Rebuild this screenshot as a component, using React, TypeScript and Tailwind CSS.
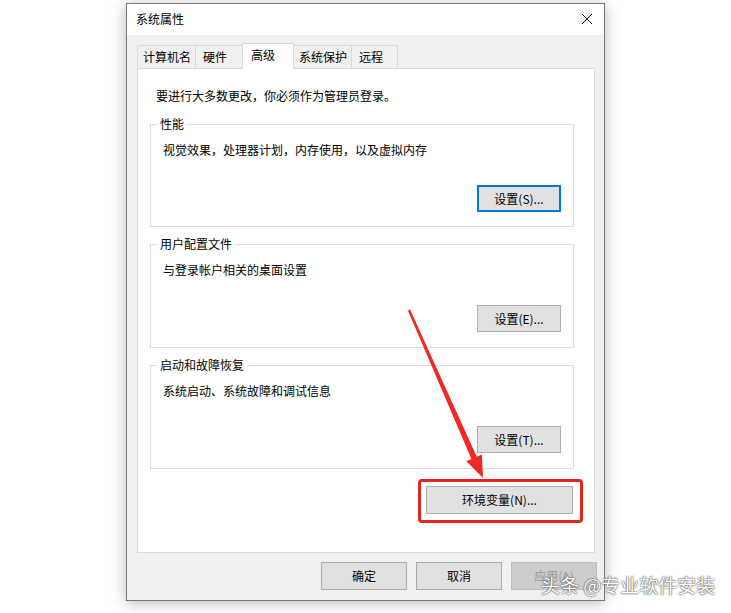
import React from "react";

const FONT = '"Microsoft YaHei", "Noto Sans CJK SC", "Noto Sans", sans-serif';

function WinButton({
  label,
  focused,
  disabled,
  className = "",
}: {
  label: string;
  focused?: boolean;
  disabled?: boolean;
  className?: string;
}) {
  const base = "flex items-center justify-center text-[12px] leading-[16px]";
  const look = disabled
    ? "bg-[#cccccc] border border-[#bfbfbf] text-[#9a9a9a]"
    : focused
    ? "bg-[#e1e1e1] border-2 border-[#0078d7] text-black"
    : "bg-[#e1e1e1] border border-[#adadad] text-black";
  return <div className={`${base} ${look} ${className}`}>{label}</div>;
}

function Group({
  title,
  desc,
  button,
  focused,
  className = "",
}: {
  title: string;
  desc: string;
  button: string;
  focused?: boolean;
  className?: string;
}) {
  return (
    <div className={`relative ml-[12px] w-[424px] border border-[#dcdcdc] flex flex-col ${className}`}>
      <span className="absolute left-[6px] -top-[9px] px-[3px] bg-white text-[12px] leading-[16px] text-black">
        {title}
      </span>
      <div className="pt-[17px] pl-[12px] text-[12px] leading-[16px] text-black">{desc}</div>
      <div className="flex justify-end pr-[12px] mt-[27px]">
        <WinButton label={button} focused={focused} className="w-[84px] h-[27px]" />
      </div>
    </div>
  );
}

export default function App() {
  const tabs = [
    { label: "计算机名", w: "w-[59px] pl-[5px]", sel: false },
    { label: "硬件", w: "w-[48px] pl-[7px]", sel: false },
    { label: "高级", w: "w-[52px] pl-[8px]", sel: true },
    { label: "系统保护", w: "w-[59px] pl-[5px]", sel: false },
    { label: "远程", w: "w-[47px] pl-[7px]", sel: false },
  ];

  return (
    <div className="relative w-[731px] h-[613px] bg-white overflow-hidden" style={{ fontFamily: FONT }}>
      <div className="pl-[126px] pt-[3px]">
        <div className="w-[479px] h-[598px] border border-[#777777] bg-[#f0f0f0] flex flex-col shadow-[0_2px_14px_rgba(0,0,0,0.28)]">
          {/* Title bar */}
          <div className="h-[31px] bg-white flex items-center justify-between pl-[9px] pr-[10px] pb-[1px]">
            <span className="text-[12px] leading-[16px] text-black">系统属性</span>
            <svg width="12" height="12" viewBox="0 0 12 12" className="mr-[1px]">
              <path d="M1 1 L11 11 M11 1 L1 11" stroke="#111" strokeWidth="1" fill="none" />
            </svg>
          </div>

          {/* Body */}
          <div className="flex-1 flex flex-col pt-[8px]">
            {/* Tabs */}
            <div className="flex items-end pl-[10px] h-[25px]">
              {tabs.map((t, i) => (
                <div
                  key={t.label}
                  className={`${t.w} ${i > 0 ? "-ml-px" : ""} flex items-center justify-start text-[12px] leading-[16px] text-black border-l border-r border-t border-[#d9d9d9] ${
                    t.sel ? "relative z-10 h-[26px] -mb-px bg-white pb-[3px]" : "h-[23px] bg-[#f0f0f0]"
                  }`}
                >
                  {t.label}
                </div>
              ))}
            </div>

            {/* Panel */}
            <div className="ml-[10px] w-[458px] h-[485px] bg-white border border-[#d9d9d9] flex flex-col">
              <div className="pt-[19px] pl-[18px] text-[12px] leading-[16px] text-black">
                要进行大多数更改，你必须作为管理员登录。
              </div>
              <Group
                className="mt-[20px] h-[103px]"
                title="性能"
                desc="视觉效果，处理器计划，内存使用，以及虚拟内存"
                button="设置(S)..."
                focused
              />
              <Group className="mt-[17px] h-[104px]" title="用户配置文件" desc="与登录帐户相关的桌面设置" button="设置(E)..." />
              <Group className="mt-[17px] h-[104px]" title="启动和故障恢复" desc="系统启动、系统故障和调试信息" button="设置(T)..." />
              <div className="flex justify-start pl-[288px] mt-[17px]">
                <div className="relative">
                  <WinButton label="环境变量(N)..." className="w-[147px] h-[28px]" />
                  <div className="absolute -left-[8px] -right-[10px] -top-[7px] -bottom-[9px] border-[3px] border-[#e3261f] rounded-[4px] pointer-events-none" />
                </div>
              </div>
            </div>

            {/* Bottom buttons */}
            <div className="flex justify-end gap-[9px] pr-[7px] mt-[9px]">
              <WinButton label="确定" className="w-[86px] h-[28px]" />
              <WinButton label="取消" className="w-[86px] h-[28px]" />
              <WinButton label="应用(A)" disabled className="w-[86px] h-[28px]" />
            </div>
          </div>
        </div>
      </div>

      {/* Red arrow annotation */}
      <svg className="absolute left-0 top-0 pointer-events-none" width="731" height="613" viewBox="0 0 731 613">
        <polygon
          points="407.9,310.5 410.1,309.5 476.8,456.7 481.9,454.5 483,478 466.3,461.3 471.4,459.1"
          fill="#ee2a24"
        />
      </svg>

      {/* Watermark */}
      <div className="absolute left-[541px] top-[572px] text-[19px] leading-[26px] text-white [text-shadow:0_0_2px_#444,0_0_1px_#444]">
        头条 @专业软件安装
      </div>
    </div>
  );
}
